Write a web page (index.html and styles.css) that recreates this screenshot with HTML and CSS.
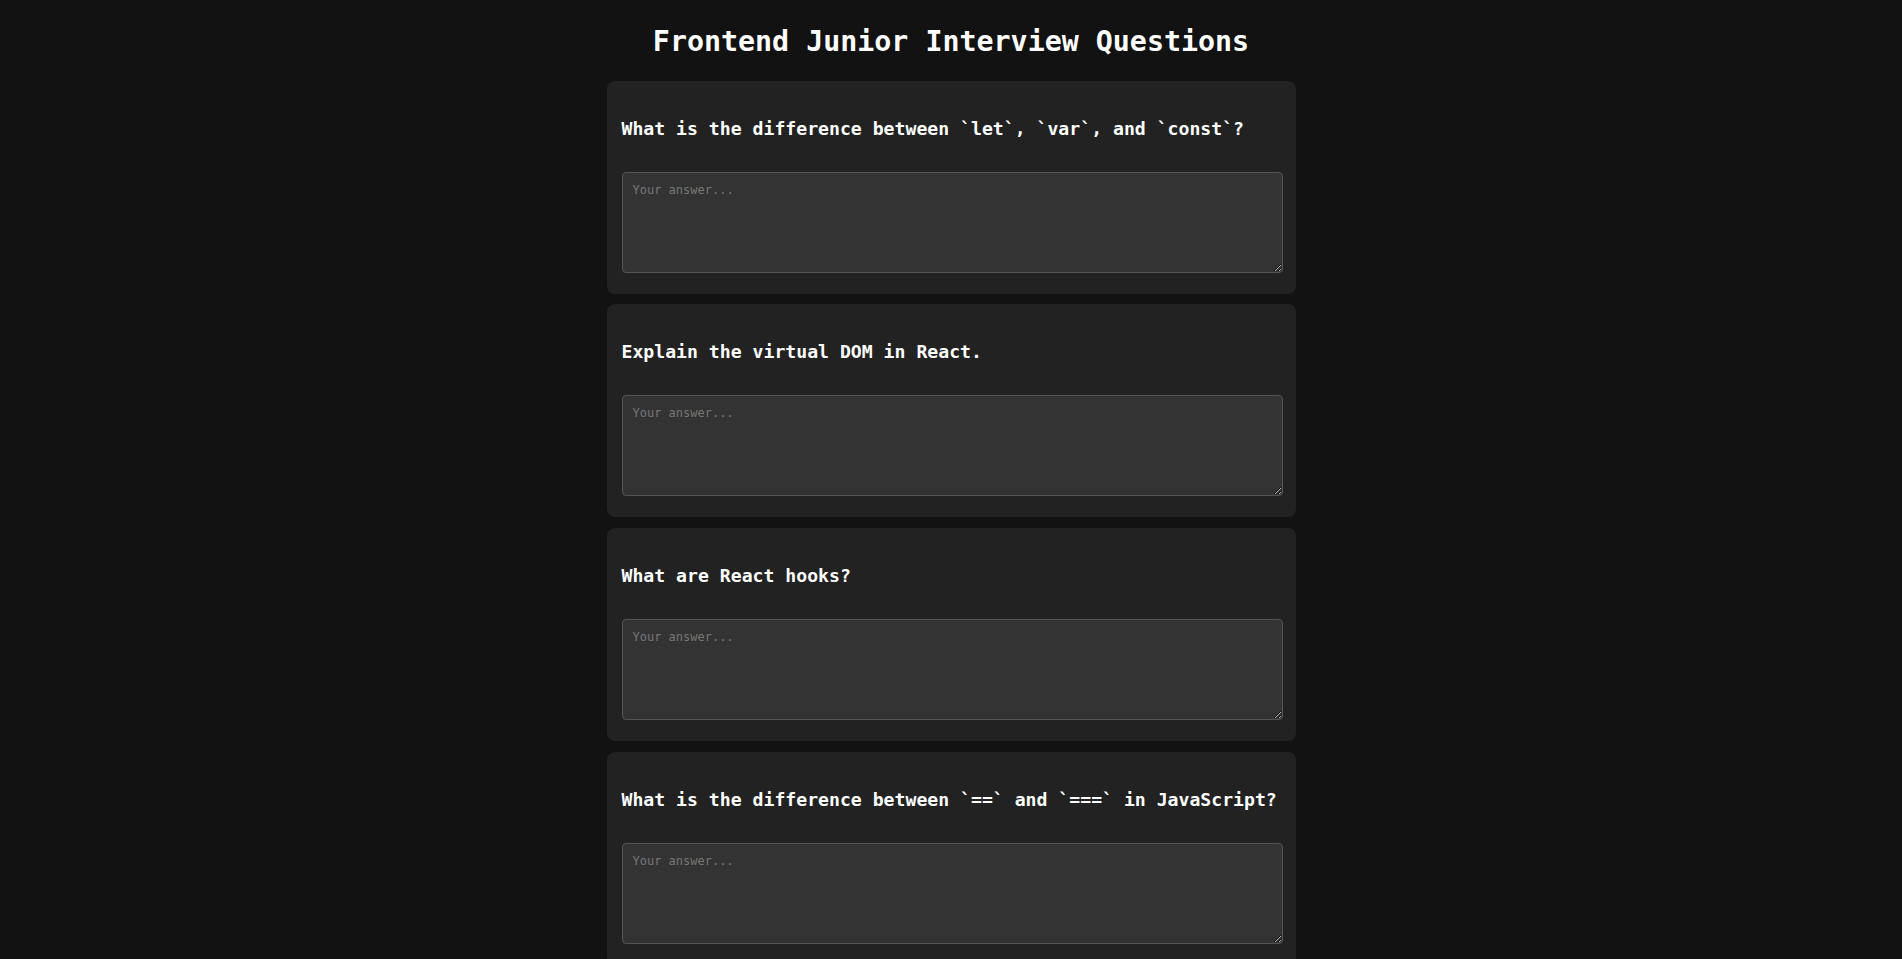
FILE: index.html
```html
<!DOCTYPE html>
<html lang="en">
<head>
<meta charset="utf-8">
<title>Frontend Junior Interview Questions</title>
<link rel="stylesheet" href="styles.css">
</head>
<body>
<main class="page">
  <h1 class="title">Frontend Junior Interview Questions</h1>
  <section class="card">
    <h2 class="question">What is the difference between `let`, `var`, and `const`?</h2>
    <textarea class="answer" placeholder="Your answer..."></textarea>
  </section>
  <section class="card">
    <h2 class="question">Explain the virtual DOM in React.</h2>
    <textarea class="answer" placeholder="Your answer..."></textarea>
  </section>
  <section class="card">
    <h2 class="question">What are React hooks?</h2>
    <textarea class="answer" placeholder="Your answer..."></textarea>
  </section>
  <section class="card">
    <h2 class="question">What is the difference between `==` and `===` in JavaScript?</h2>
    <textarea class="answer" placeholder="Your answer..."></textarea>
  </section>
</main>
</body>
</html>
```
FILE: styles.css
```css
html, body {
  margin: 0;
  padding: 0;
  background: #121212;
}

body {
  font-family: "DejaVu Sans Mono", "Liberation Mono", monospace;
  color: #ffffff;
}

.page {
  width: 689px;
  margin: 0 auto;
  padding: 25px 0 20px;
  display: flex;
  flex-direction: column;
  gap: 10.67px;
}

.title {
  margin: 0 0 12px;
  font-size: 28.3px;
  font-weight: bold;
  line-height: normal;
  text-align: center;
  white-space: nowrap;
}

.card {
  height: 213px;
  box-sizing: border-box;
  background: #222222;
  border-radius: 8px;
  padding: 15px 13px 21px 15px;
  display: flex;
  flex-direction: column;
}

.question {
  margin: 22px 0 33px;
  font-size: 18.15px;
  line-height: 21px;
  font-weight: bold;
  white-space: nowrap;
}

.answer {
  display: block;
  width: 100%;
  height: 101px;
  box-sizing: border-box;
  margin: 0;
  padding: 10px;
  background: #333333;
  border: 1px solid #555555;
  border-radius: 4px;
  color: #dddddd;
  font-family: "DejaVu Sans Mono", "Liberation Mono", monospace;
  font-size: 12px;
  resize: vertical;
}

.answer::placeholder {
  color: #777777;
}
```
